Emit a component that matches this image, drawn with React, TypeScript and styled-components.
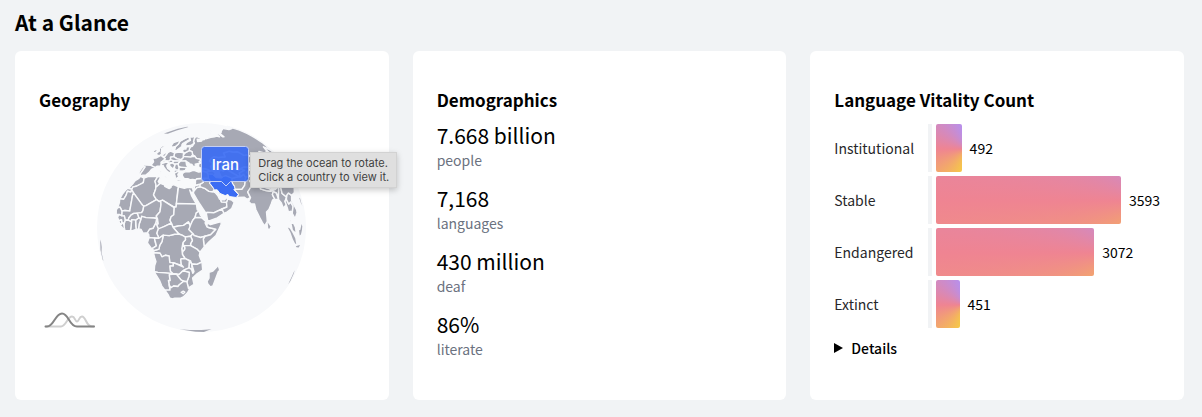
import React from "react";
import styled, { createGlobalStyle } from "styled-components";

const GlobalStyle = createGlobalStyle`
  *, *::before, *::after { box-sizing: border-box; }
  body {
    margin: 0;
    background: #f1f3f5;
    color: #000;
    font-family: "Source Sans Pro", "Noto Sans CJK SC", "Noto Sans", sans-serif;
    font-size: 15px;
    line-height: 20px;
  }
  h1, h2, p, dl, dd { margin: 0; }
`;

const Page = styled.main`
  padding: 7px 18px 17px 15px;
`;

const PageTitle = styled.h1`
  font-size: 21px;
  line-height: 30px;
  font-weight: 700;
`;

const Cards = styled.div`
  display: grid;
  grid-template-columns: repeat(3, minmax(0, 1fr));
  gap: 24px;
  margin-top: 14px;
`;

const Card = styled.section`
  padding: 37px 24px 41px;
  border-radius: 6px;
  background: #fff;
`;

const CardTitle = styled.h2`
  font-size: 17px;
  line-height: 24px;
  font-weight: 700;
`;

const MapArea = styled.div`
  position: relative;
  height: 209px;
  margin-top: 11px;
`;

const GlobeSvg = styled.svg`
  display: block;
  width: 209px;
  height: 209px;
`;

const GlobeFrame = styled.div`
  position: relative;
  width: 209px;
  margin: 0 auto;
`;

const Callout = styled.div`
  position: absolute;
  left: 104px;
  top: 23px;
  width: 48px;
  height: 41px;
  padding-top: 9px;
  color: #fff;
  font-family: Inter, "Liberation Sans", sans-serif;
  font-size: 15px;
  font-weight: 500;
  line-height: 20px;
  text-align: center;
`;

const CalloutShape = styled.svg`
  position: absolute;
  left: 0;
  top: 0;
  width: 48px;
  height: 41px;
`;

const CalloutText = styled.span`
  position: relative;
`;

const Hint = styled.div`
  position: absolute;
  left: 153px;
  top: 29px;
  padding: 3px 7px;
  border: 1px solid #d2d2d2;
  background: #dfdfdf;
  box-shadow: 0 2px 6px rgba(0, 0, 0, 0.22);
  color: #3f3f3f;
  font-family: Inter, "Liberation Sans", sans-serif;
  font-size: 11px;
  line-height: 14px;
  white-space: nowrap;
`;

const ChartLogo = styled.a`
  position: absolute;
  left: 5px;
  bottom: 3px;
  width: 52px;
  height: 18px;
`;

const Stats = styled.dl`
  display: flex;
  flex-direction: column;
  gap: 14px;
  margin-top: 9px;
`;

const Stat = styled.div`
  display: flex;
  flex-direction: column-reverse;
`;

const StatValue = styled.dd`
  font-size: 21px;
  line-height: 29px;
`;

const StatLabel = styled.dt`
  color: #6b7280;
  font-size: 14px;
  line-height: 20px;
`;

const Bars = styled.table`
  display: block;
  margin-top: 12px;

  tbody {
    display: flex;
    flex-direction: column;
    gap: 4px;
  }
`;

const BarRow = styled.tr`
  display: flex;
  height: 48px;
`;

const BarLabel = styled.th`
  display: flex;
  align-items: center;
  width: 98px;
  padding: 0;
  border-right: 4px solid #f1f3f5;
  color: #27272a;
  font-size: 14px;
  font-weight: 400;
`;

const BarCell = styled.td`
  display: flex;
  flex: 1;
  align-items: center;
  gap: 8px;
  padding: 0 0 0 4px;
  font-size: 14px;
`;

const Bar = styled.div`
  flex: none;
  height: 48px;
  border-radius: 2px;
  background: conic-gradient(at 120% 52%, #f6cb45 0deg 190deg, #ef8492 270deg, #b690ee 350deg);
`;

const Details = styled.details`
  margin-top: 10px;
  font-size: 14px;
  font-weight: 500;

  summary {
    display: flex;
    align-items: center;
    gap: 8px;
    list-style: none;
    cursor: pointer;
  }
`;

type Ring = string;

/** Country outlines, each one a ring of "longitude,latitude" pairs. */
const countries: Ring[] = [
  // Africa
  "-5.9,35.8 -2.2,35.1 -1.2,32.3 -3.6,30.9 -5.5,29.9 -8.7,28.8 -8.7,27.6 -12,28 -9.8,31 -9,32.8 -6.8,34.2",
  "-8.7,27.6 -8.7,26 -12,26 -12,23.4 -13,21.3 -17,21 -16,23.7 -14.5,26 -13,27.7",
  "-8.7,27.3 -4.9,25 -6.5,25 -5.5,16 -5.3,15.5 -9.5,15.3 -12,14.8 -14.5,16.6 -16.5,16 -16.2,19 -17,21 -13,21.3 -12,23.4 -12,26 -8.7,26",
  "-8.7,28.8 -5.5,29.9 -1.2,32.3 -2.2,35.1 0.5,36.3 4.8,36.9 8.4,36.9 7.5,34 9,32 9.8,29.4 9.3,26 12,23.5 5.7,19.6 3.2,19 3.1,19.7 1.8,20.6 -4.9,25 -8.7,27.3",
  "8.4,36.9 11,37 10.6,35.8 10,34 11.5,33.1 11.4,32.4 10,30.9 9.5,30.3 9,32 7.5,34",
  "11.5,33.1 15.2,32.3 15.7,31.4 19,30.3 20,31 20.1,32.2 21.5,32.8 25,31.6 24.8,30 25,22 25,20 23.9,20 16,23.4 14.1,22.5 12,23.5 9.3,26 9.8,29.4 9.5,30.3 11.4,32.4",
  "25,31.6 29,30.9 31,31.5 34.2,31.3 34.9,29.5 34.2,27.8 32.5,29.9 34,26.5 35.6,24 37,22 25,22",
  "-4.9,25 1.8,20.6 3.1,19.7 4.2,19.1 4.2,16.8 3.6,15.5 1,15 -2,14.5 -4,13.3 -5.2,11.7 -5.5,10.4 -8,10.2 -9,12.3 -11.4,12.2 -12,14.8 -9.5,15.3 -5.3,15.5 -5.5,16 -6.5,25",
  "4.2,19.1 5.7,19.6 12,23.5 14.1,22.5 15,23 15.5,21 15.5,16.9 13.5,14.4 13.9,13.3 12,13.2 7,13 4,13.5 3.6,11.7 2.1,12.5 0.4,14.9 3.6,15.5 4.2,16.8",
  "15,23 16,23.4 23.9,19.6 24,15.7 22.5,14.5 22,12.6 22.9,11 19,9 16.7,7.6 15.3,7.5 14,10 15,10.2 14.5,12.8 13.5,14.4 15.5,16.9 15.5,21",
  "25,22 37,22 37.5,18.8 38.6,18 37,17 36.3,14.5 35,12.8 34,10.6 33.8,9.5 32.7,12 30,10 27,9.6 24,8.8 22.9,11 22,12.6 22.5,14.5 24,15.7 23.9,20 25,20",
  "24,8.8 27,9.6 30,10 32.7,12 33.8,9.5 33,7.8 35.3,5.5 34,4.2 31,3.7 29.5,4.5 27.4,5.2",
  "36.3,14.5 40,14.5 42.4,12.5 42,11.5 43,9.5 44,9 48,8 45,5 42,4.2 39.5,3.5 36,4.5 35.3,5.5 33,7.8 34,10.6 35,12.8",
  "38.6,18 39.3,15.8 43,12.6 42.4,12.5 40,14.5 36.3,14.5 37,17",
  "43.2,11.5 45,10.5 51.1,12 51,10.5 48,4.5 44,1 41.5,-1.7 41,2.8 42,4.2 45,5 48,8 44,9 43,9.5",
  "34,4.2 35.3,5.5 36,4.5 39.5,3.5 42,4.2 41,2.8 41.5,-1.7 39.2,-4.7 37.7,-3.1 34,-1 34,0.1 35,1.9",
  "31,3.7 34,4.2 35,1.9 34,0.1 34,-1 30,-1.4 29.8,0.6 31.2,2.2",
  "34,-1 37.7,-3.1 39.2,-4.7 38.8,-6.5 39.5,-8.5 40.3,-10.3 37.5,-11.7 34.5,-11.5 33.9,-9.7 31,-8.5 29.4,-6 29.6,-4.5 30.8,-3 30.5,-1.1",
  "29.1,-2.2 30.5,-1.1 30.8,-2.5 30.5,-3.5 29.4,-4.4",
  "18.5,4.2 22,4.1 25,5 27.4,5.2 29.5,4.5 31,3.7 31.2,2.2 29.8,.6 29.4,-1.5 29.1,-2.8 29.4,-6 30.7,-8.3 28.7,-8.5 28.4,-9.2 28.6,-12 29.8,-13.4 28,-12.2 26,-11.7 24,-11 22,-11 21.8,-7.3 19.5,-7 17.5,-8 16.5,-6 12.4,-5.9 13,-4.7 15.9,-3.8 16.5,-1.5 17.8,.5",
  "12.4,-6 16.5,-6 17.5,-8 19.5,-7 21.8,-7.3 22,-11 24,-11 24,-13 22,-13 22,-16.2 23.3,-17.6 18.5,-17.4 14,-17.4 11.7,-17.2 12.5,-13.5 13.7,-11 13,-8.5",
  "24,-11 26,-11.7 29.8,-13.4 28.6,-12 28.4,-9.2 28.7,-8.5 31,-8.5 33.3,-9.7 33,-13.8 30.2,-15 28.9,-16 27,-18 25,-17.7 23.3,-17.6 22,-16.2 22,-13 24,-13",
  "33.3,-9.7 34.5,-11.5 34.6,-14 35.7,-16 35,-17 34.3,-14.6 33,-13.8",
  "34.5,-11.5 37.5,-11.7 40.3,-10.3 40.7,-15 37,-17.7 34.8,-20 35.5,-24 32.8,-25.8 32,-26.8 31.3,-22.4 32.7,-19 33,-16.6 30.3,-15.8 30.2,-15 33,-13.8 34.3,-14.6 35,-17 35.7,-16",
  "25.3,-17.8 27,-18 28.9,-16 30.3,-15.8 33,-16.6 32.7,-19 31.3,-22.4 29.4,-22.1 28,-21.5",
  "25.3,-17.8 28,-21.5 29.4,-22.1 26.5,-24.5 25.5,-25.7 22.8,-25.5 20.7,-26.8 20,-24.8 20,-22 21,-22 21,-18.3",
  "11.7,-17.2 14,-17.4 18.5,-17.4 25.2,-17.7 21,-18.3 21,-22 20,-22 20,-28.4 16.5,-28.6 15,-26 14.3,-22.5",
  "16.5,-28.6 20,-28.4 20,-24.8 20.7,-26.8 22.8,-25.5 25.5,-25.7 26.5,-24.5 29.4,-22.1 31.3,-22.4 32,-26.8 32.8,-27 31,-30 28,-32.9 25.7,-34 22,-34.1 20,-34.8 18.4,-34 18,-32",
  "27,-29.6 28.5,-28.7 29.4,-29.4 28.2,-30.5",
  "15.3,7.5 19,9 22.9,11 24,8.8 27.4,5.2 25,5 22,4.1 18.5,4.2 16,2.3 14.5,5",
  "14,12.8 15,10.2 14,10 15.3,7.5 14.5,5 16,2.3 9.8,2.3 9.6,4 8.6,4.8 10,7 12,7.5 13.5,10.5",
  "3.6,11.7 4,13.5 7,13 12,13.2 13.9,13 13.5,10.5 12,7.5 10,7 8.6,4.8 6,4.3 4.4,6.3 2.7,6.4 2.8,9",
  "2.7,6.4 1,6 0,11 2.1,12.5 3.6,11.7 2.8,9",
  "-5.2,11.5 -4,13.3 -2,14.5 .4,14.9 2.1,12.5 0,11 -2.8,11 -2.8,9.7 -5.4,10.4",
  "0,11 -2.8,11 -2.8,7.5 -3,5 -2,4.8 1,6 .5,8",
  "-8,10.2 -5.4,10.4 -2.8,9.7 -2.8,7.5 -3,5 -7.5,4.4 -8.5,7.5",
  "-11.4,6.9 -9.3,8.5 -8.5,7.5 -7.5,4.4",
  "-15,11 -13.7,12.6 -11.4,12.2 -9,12.3 -8,10.2 -8.5,7.5 -9.3,8.5 -10.5,8.5 -11,10 -13.2,9",
  "-13.2,9 -11,10 -10.5,8.5 -11.4,6.9",
  "-16.5,16 -14.5,16.6 -12,14.8 -11.4,12.2 -13.7,12.6 -16.7,12.4 -17.5,14.7",
  "9.8,2.3 13.2,2.2 14,-1 14.4,-2 11.5,-3.9 8.8,-.8",
  "13.2,2.2 16,2.3 18.5,4.2 17.8,.5 16.5,-1.5 15.9,-3.8 13,-4.7 11.5,-3.9 14.4,-2",
  "49.3,-12 50.5,-15.5 49.7,-16 47,-25 45.3,-25.6 43.7,-23.5 43.3,-22 44.4,-20 44.3,-16.5 46.5,-15.7 48.5,-13.5",
  // Middle East
  "35,29.3 37,31.5 39,32 42,31 44.7,29.2 47.5,28.9 48.5,28.4 50,26.7 50.8,24.8 51.5,24.3 52,23 55,22.7 55,20 52,19 47,17 43,17.3 42.8,16.4 40.5,19.8 39,22 37,25 35,28",
  "42.8,16.4 43,17.3 47,17 52,19 53,16.6 49,14.2 45,12.8 43.5,12.7",
  "55,22.7 56,24.5 58.5,23.7 59.8,22.4 57.8,19 55,17.3 53,16.6 52,19 55,20",
  "51.6,24.2 54,24.2 56.2,26 56,24.5 55,22.7 52,23",
  "42.4,37.1 44.8,37.2 46,35.7 45.5,34 48,31 48,30 47,29 44.7,29.2 42,31 39,32 38.8,33.4 41,34.5",
  "35,29.3 35.5,32.5 38.8,33.4 39,32 37,31.5",
  "34.3,31.3 35,33 36,34.6 36.6,34.2 35.5,32.5 35,29.5",
  "35.8,35.9 36.7,36.8 42.4,37.1 41,34.5 38.8,33.4 35.8,32.8 36,34.6",
  "26.2,39.5 27,40.6 29,41.2 31,41.1 33.3,42 35,42 38,41 41.5,41.5 43.6,41 44.8,39.7 44.8,37.2 42.4,37.1 36.7,36.8 36,36 34,36.3 32.5,36.1 30.6,36.8 28,36.8 26.5,38.3",
  "41.5,41.5 40,43.4 43,43 46.5,41.7 43.6,41",
  "43.6,41 46.5,41.7 48,41.9 50,40.3 48.9,38.4 46.5,38.9 44.8,39.7",
  // Asia
  "61.1,36.5 64.5,37 68,37.1 71,38.4 71.6,36.8 74.9,37.3 71.5,36.2 70,33.5 69,31.7 66.4,29.5 61,29.8 61.7,31.4 60.6,33.7",
  "61,29.8 66.4,29.5 69,31.7 70,33.5 71.5,36.2 74.9,37.1 77,35.5 74,34 74.5,31.5 72,28 70,27.8 70.5,25.5 71,24.4 68.5,23.7 67,24.9 61.6,25.1 63.3,26.7",
  "77,35.5 78.7,31.5 81,30 80,28.8 84,27.3 88,26.5 92,27 97,28.2 94.5,25 93,22.8 92.2,25 89.8,26 88.2,24.5 89,21.7 87,21.5 85,19.5 82.3,16.7 80.2,15.5 80,13 79.8,10.3 77.6,8 76.3,10 74.8,13 73,17.5 72.8,20.7 70.5,20.8 69.2,22.3 71,24.4 70,27.8 74.5,31.5 74,34",
  "80,28.8 81,30.2 88,27.9 88,26.5 84,27.3",
  "88.2,24.5 89.8,26 92.2,25 92.3,21 89,21.7",
  "97,28.2 98.7,27.5 97.6,24 101,21.5 98,19.5 98.5,16 99,12 98.5,10 98,15.5 97,17 94.5,16 94,19 92.3,21 93,22.8 94.5,25",
  "98,19.5 100,20.3 101,17.5 104,18.3 105.5,15.5 102.5,12.5 100.9,13.4 100,13.3 99.3,10 100.5,7.3 102,6.2 100.3,6.5 98.3,8.3 99,12 98.5,16",
  "102,22.5 105,23.3 108,21.5 105.7,19 109.2,13 109,11.5 105,8.7 102.5,12 105.5,15.5 104,18.3 101,17.5 100,20.3",
  "74,39.5 76,40.4 80,42 80,45 82.5,45.3 85.5,48.2 87.5,49 91,45.2 96,42.7 105,41.7 112,43.7 116,46.5 120,53 127,50 131,48 130,43 121,39 118,39 121,37 119,35 122,31 120,26 114,22.3 108,21.5 105,23.3 102,22.5 101,21.5 97.6,24 98.7,27.5 97,28.2 92,27.8 88,27.9 81,30.2 78.7,31.5 77,35.5 74.9,37.3",
  "87.8,49 92,50.7 98,50 102,51.5 108,49.5 116,49.8 119,47 116,46.5 112,43.7 105,41.7 96,42.7 91,45.2",
  "46.6,48.5 48,50 51,51.5 55,50.8 58.5,51 61,51 61,54 68,55 71,54.2 76,54 77,53.3 80,50.8 83.5,51 87.4,49.1 85.5,48.2 82.5,45.3 80,45 80,42 74,43 70,42.2 68,41.1 66.5,42 62,43.5 58.5,45.5 56,45 56,41.3 54.5,42 52.5,42 50.3,44.5 53,46.8 49,46.5",
  "56,41.3 56,45 58.5,45.5 62,43.5 66.5,42 68,41.1 70.5,42 73,40.8 70.5,40.2 68,39.5 67.8,37.2 66.5,37.4 64,39 60.5,41.3 58.5,42.7",
  "54,37.2 53,40 52.8,41.3 54.5,42 56,41.3 58.5,42.7 60.5,41.3 64,39 66.5,37.4 64.5,37 61.1,36.5 57.3,38.2",
  "70.5,42 74,43 80,42 74,39.5 74.9,37.3 71.6,36.8 71,38.4 67.8,37.2 68,39.5 70.5,40.2 73,40.8",
  "31,69.5 33,69.3 41,67 40,66.3 34,66.7 35,64.4 38,64.5 40,64.8 41,66 44,66.3 44,68.5 46,67 54,68.5 60,68.7 64,69.5 68,68.5 67,71.5 70,73 72,71 73,68 75,68 75,72 80,73 87,75 98,76.3 105,77.5 113,74 125,73.5 140,72.5 160,70 175,69.5 170,62 160,60 150,59 140,54 135,44 131,43 131,48 127,50 120,53 116,49.8 108,49.5 102,51.5 98,50 92,50.7 87.4,49.1 83.5,51 80,50.8 77,53.3 76,54 71,54.2 68,55 61,54 61,51 58.5,51 55,50.8 51,51.5 48,50 46.6,48.5 49,46.5 47,44.7 47.5,43 48.5,41.9 46.5,41.9 43,43.2 40,43.4 37.5,44.7 38,46.7 39.5,47.2 38,48 40,49.6 35.5,50.4 34,52 32,53 30.8,55.5 28,56.2 27.5,57.5 28,59.5 30,60 31.5,62.8 30,64 29.5,67",
  "52,71 55,73.5 68,77 60,76 55,71",
  // Europe
  "22.5,48.1 24,51.6 30.5,51.4 34,52 35.5,50.4 40,49.6 38,48 39.5,47.2 35,46.2 36,45.3 33.5,44.6 32.5,46 30.5,46.3 28.3,45.4 30,47 27,48.3",
  "23.5,52 24,54 26.5,55.6 28,56.2 30.8,55.5 32,53 30.5,51.4 24,51.6",
  "21,56 21.7,57.6 24,57.3 23.5,59.2 28,59.5 27.5,57.5 28,56.2 26.5,55.6 24,54 21.5,55.2",
  "21.5,61 21.5,63 25.4,65.1 23.8,67 21,69 25.7,69 29,69.8 30,67.7 29.5,67 30,64 31.5,62.8 28,60.5 23,59.9",
  "11.2,59 12.5,61 12,64 15,66.5 20.5,69 23.8,66 21,64.5 17.5,62 17.5,60.5 18.5,59.5 16.5,57.5 14.5,55.6 13,55.5",
  "5.5,59 5,62 10.5,64.5 14.5,68 20,70 26,71 31,70 25.7,69 20.5,69 15,66.5 12,64 12.5,61 11.2,59 8,58.1",
  "14.3,53.9 18.5,54.7 23,54.3 23.5,52 24,50.7 22.5,49.2 19,49.5 15,51",
  "7,53.5 9,54.8 14.2,53.9 15,51 12.3,50.3 13.5,48.7 12.8,47.6 7.6,47.6 8,49 6.2,50",
  "3,51.4 5,53.3 7,53.5 6.2,50",
  "8.2,55 8.3,57 10.5,57.6 10,55",
  "-1.8,43.4 -1.3,46 -4.5,48.2 -1.5,48.7 0.2,49.7 2,51 6.2,49.6 8,49 7,47.4 6.1,46.3 7.5,43.8 4,43.4 3.1,42.4",
  "-9.2,43 -1.8,43.4 3.1,42.4 0.7,41 0,38.9 -1.8,37 -4.5,36.7 -6,36.1 -7.4,37.2 -6.9,40.5 -6.6,41.9 -8.8,42",
  "-8.8,41.8 -6.6,41.9 -6.9,40.5 -7.4,37.2 -9,37 -9.4,38.8",
  "-5.5,50.1 -3,51.4 -5,52 -3,54 -5,55 -6,57 -5,58.6 -3,58.6 -2,57.5 -3,56 -1.5,55 0.3,53 1.6,52.6 1,51.1",
  "-10,52 -6.3,52.3 -6,54 -7.5,55.2 -10,54",
  "7.5,43.8 7,45.5 10.5,46.8 13.6,46.4 12.3,45.2 12.4,44.2 14,42.6 16,41.8 18.4,40.2 16.9,40.5 17,39 15.7,38 16,40 13.5,41.2 10.5,43 9,44.4",
  "12.5,38 15.5,38.2 15,36.8",
  "8.3,39 8.3,41 9.7,41 9.5,39.2",
  "6.1,46.3 7.6,47.6 12.8,47.6 13.5,48.7 17,48.5 16,46.8 13.6,46.4 10.5,46.8 7,45.9",
  "12.3,50.3 15,51 19,49.5 22.5,49.2 22,48.2 17,48 13.5,48.7",
  "16,46.8 17,48 22.5,48.1 21,46.2 18,45.8",
  "21,46.2 22.5,48.1 27,48.3 28.3,45.4 29.6,45 28.6,43.8 24,43.7 22,44.6",
  "22.5,44 28.6,43.8 28,42 26,41.4 23,41.4",
  "13.7,45.3 16,46.5 18,45.8 19,45 18.5,42.4 16,43.6",
  "19,45.8 21,46.2 22,44.6 22.5,44 23,42 20.5,42 19,43.5",
  "19.4,42 23,42 23,41.4 20,39.7",
  "20,39.7 23,41.3 26,41.2 26,40.8 23.5,40.3 23,39 24,37.8 22.5,36.6 21.7,36.9 21.2,38.3",
];

/** Islands and lands near the rim, too thin to carry a border line. */
const slivers: Ring[] = [
  "-24,69 -20,74 -13,81 -22,81 -30,76 -34,68",
  "80,9.7 81.5,7.5 81,6.2 80,6.4",
  "23.6,35.4 26.2,35.2 24,35.1",
  "100.3,6.5 102,6.2 103.5,4 104,1.4 101.3,2.9",
  "96,5 98,4.2 100.5,1.5 103.8,-2 105.5,-5.5 104,-5 101,-2 98.5,2",
  "105.3,-6.7 108.5,-6.7 112,-7 110,-8 106.5,-7.4",
  "109.2,1.7 111,1.6 114,4.5 115,3 114,1 112,-1 110,-1.3",
  "120,18 122,18 121.5,14 124,13 120.5,14.5",
  "114,-22 113.5,-26 115.5,-31 116.5,-29 115.5,-24",
  "0,-71 20,-70.5 40,-70 50,-69 55,-68 55,-85 0,-85",
  "-36.5,-4.5 -35,-6 -35,-8.5 -38,-12 -39,-17 -41,-17 -40,-11",
];

const iran: Ring =
  "44.8,37.2 44.8,39.7 48,39.6 48.9,38.4 50,37.4 53.9,37 55.5,38 57.3,38.2 61.1,36.5 60.6,33.7 61.7,31.4 61.8,30 60.9,29.8 63.3,26.7 61.6,25.1 57.3,25.8 56.5,27.1 54.7,26.5 51.5,27.9 50,30 48,30 47.7,31 45.5,34 46,35.7";

const RADIUS = 104.5;
const CENTER = { lon: 40, lat: 9 };
const rad = (deg: number) => (deg * Math.PI) / 180;

/** Orthographic projection; points behind the globe are moved to its rim. */
function project(lon: number, lat: number): string {
  const dLon = rad(lon - CENTER.lon);
  const phi = rad(lat);
  const phi0 = rad(CENTER.lat);
  let x = Math.cos(phi) * Math.sin(dLon);
  let y = Math.sin(phi) * Math.cos(phi0) - Math.cos(phi) * Math.sin(phi0) * Math.cos(dLon);
  const depth = Math.sin(phi) * Math.sin(phi0) + Math.cos(phi) * Math.cos(phi0) * Math.cos(dLon);
  if (depth < 0) {
    const length = Math.hypot(x, y);
    x /= length;
    y /= length;
  }
  return `${(RADIUS + x * RADIUS).toFixed(1)},${(RADIUS - y * RADIUS).toFixed(1)}`;
}

function ringPoints(ring: Ring): string {
  return ring
    .split(" ")
    .map((pair) => {
      const [lon, lat] = pair.split(",").map(Number);
      return project(lon, lat);
    })
    .join(" ");
}

function Globe() {
  return (
    <GlobeSvg viewBox="0 0 209 209" role="img" aria-label="Globe">
      <circle cx={RADIUS} cy={RADIUS} r={RADIUS} fill="#f8f9fb" />
      <g fill="#a7a9b4" stroke="#f8f9fb" strokeWidth="1.4" strokeLinejoin="round">
        {countries.map((ring, i) => (
          <polygon key={i} points={ringPoints(ring)} />
        ))}
        <polygon points={ringPoints(iran)} fill="#3b6cf3" strokeWidth="1" />
      </g>
      <g fill="#a7a9b4">
        {slivers.map((ring, i) => (
          <polygon key={i} points={ringPoints(ring)} />
        ))}
      </g>
    </GlobeSvg>
  );
}

const stats = [
  { value: "7.668 billion", label: "people" },
  { value: "7,168", label: "languages" },
  { value: "430 million", label: "deaf" },
  { value: "86%", label: "literate" },
];

const vitality = [
  { label: "Institutional", count: 492 },
  { label: "Stable", count: 3593 },
  { label: "Endangered", count: 3072 },
  { label: "Extinct", count: 451 },
];

const maxCount = Math.max(...vitality.map((v) => v.count));

export default function App() {
  return (
    <>
      <GlobalStyle />
      <Page>
        <PageTitle>At a Glance</PageTitle>
        <Cards>
          <Card>
            <CardTitle>Geography</CardTitle>
            <MapArea>
              <GlobeFrame>
                <Globe />
                <Callout>
                  <CalloutShape viewBox="0 0 48 41" aria-hidden="true">
                    <path
                      d="M3.5 .5H44.5Q47.5 .5 47.5 3.5V32.5Q47.5 35.5 44.5 35.5H29.5L25 40L20.5 35.5H3.5Q.5 35.5 .5 32.5V3.5Q.5 .5 3.5 .5Z"
                      fill="#3b6cf3"
                      fillOpacity=".92"
                      stroke="#c3cff5"
                    />
                  </CalloutShape>
                  <CalloutText>Iran</CalloutText>
                </Callout>
                <Hint role="tooltip">
                  Drag the ocean to rotate.
                  <br />
                  Click a country to view it.
                </Hint>
              </GlobeFrame>
              <ChartLogo href="#" aria-label="Chart library">
                <svg width="52" height="18" viewBox="0 0 52 18" fill="none" strokeWidth="2" strokeLinecap="round">
                  <path
                    d="M2 15.5H17C22 15.5 23.5 5.5 28 5.5C31 5.5 31 10.5 33 10.5C35 10.5 35 5.5 38 5.5C42 5.5 42 15.5 48 15.5H50"
                    stroke="#cfcfcf"
                  />
                  <path
                    d="M1.5 15.5H3C10 15.5 11 2.5 18 2.5C25 2.5 25 15.5 33 15.5H50"
                    stroke="#858585"
                  />
                </svg>
              </ChartLogo>
            </MapArea>
          </Card>

          <Card>
            <CardTitle>Demographics</CardTitle>
            <Stats>
              {stats.map((s) => (
                <Stat key={s.label}>
                  <StatLabel>{s.label}</StatLabel>
                  <StatValue>{s.value}</StatValue>
                </Stat>
              ))}
            </Stats>
          </Card>

          <Card>
            <CardTitle>Language Vitality Count</CardTitle>
            <Bars>
              <tbody>
                {vitality.map((v) => (
                  <BarRow key={v.label}>
                    <BarLabel scope="row">{v.label}</BarLabel>
                    <BarCell>
                      <Bar style={{ width: `calc((100% - 39px) * ${v.count / maxCount})` }} />
                      {v.count}
                    </BarCell>
                  </BarRow>
                ))}
              </tbody>
            </Bars>
            <Details>
              <summary>
                <svg width="9" height="10" viewBox="0 0 9 10" aria-hidden="true">
                  <path d="M0 0L9 5L0 10Z" fill="#000" />
                </svg>
                Details
              </summary>
            </Details>
          </Card>
        </Cards>
      </Page>
    </>
  );
}
